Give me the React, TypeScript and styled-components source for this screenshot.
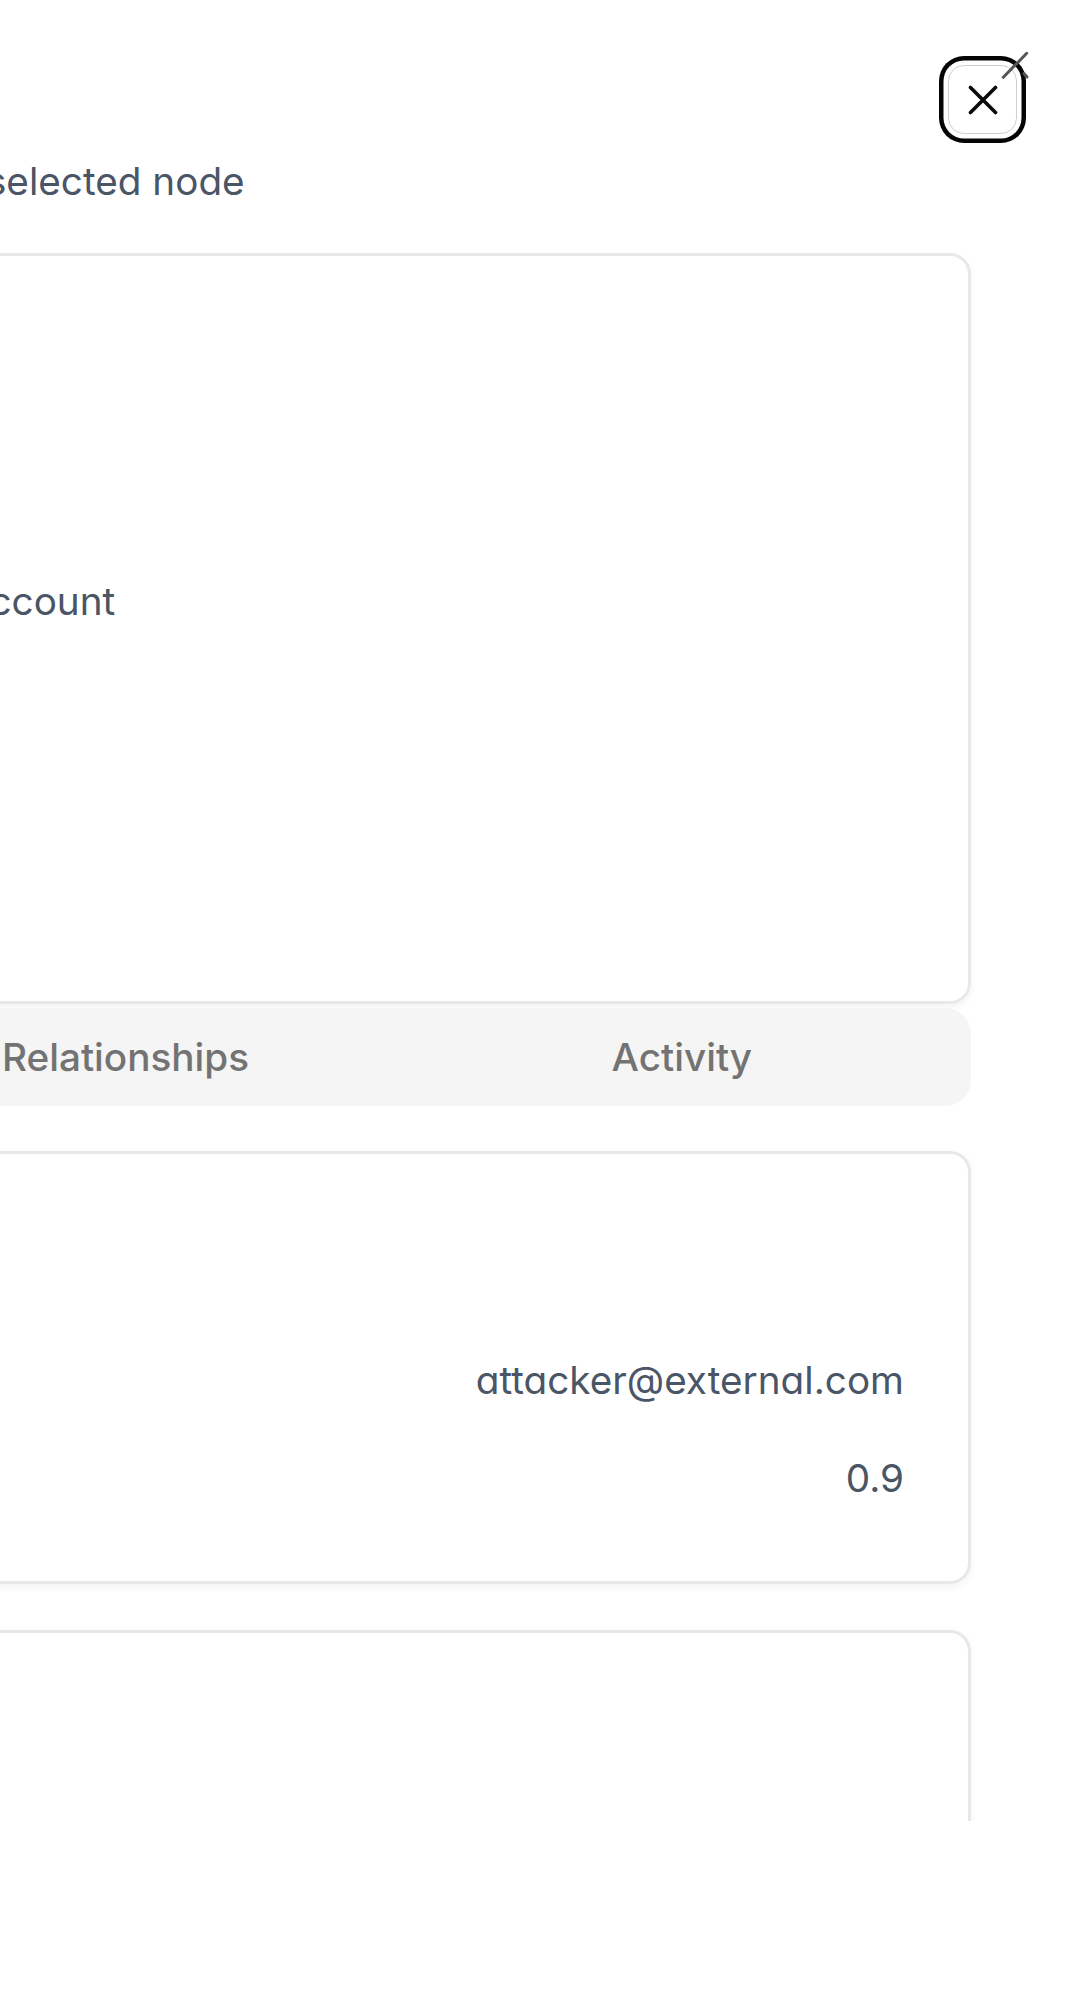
import * as React from "react";
import styled, { createGlobalStyle } from "styled-components";

const GlobalStyle = createGlobalStyle`
  html, body {
    margin: 0;
    padding: 0;
    background: #ffffff;
  }
  body {
    font-family: Inter, "Noto Sans", "Liberation Sans", sans-serif;
    -webkit-font-smoothing: antialiased;
  }
  #root {
    height: 1999px;
  }
`;

// the sheet is wider than the window and sticks out on the left
const Viewport = styled.div`
  display: flex;
  justify-content: flex-end;
  height: 1999px;
  overflow: hidden;
  background: #ffffff;
`;

const Sheet = styled.aside`
  position: relative;
  flex: 0 0 1801px;
  display: flex;
  flex-direction: column;
`;

const Header = styled.header`
  display: flex;
  justify-content: space-between;
  align-items: flex-start;
  padding: 65px 64px 0 0;
`;

const TitleBlock = styled.div<{ indent: number }>`
  display: flex;
  flex-direction: column;
  padding-left: ${(p) => p.indent}px;
`;

const Title = styled.h2`
  margin: 0 0 15px;
  font-size: 48px;
  line-height: 75px;
  font-weight: 600;
  color: #0a0a0a;
`;

const Description = styled.p`
  margin: 0;
  font-size: 38.7px;
  line-height: 53px;
  color: #4a5565;
  white-space: nowrap;
`;

const CloseButton = styled.button`
  display: flex;
  align-items: center;
  justify-content: center;
  width: 69px;
  height: 69px;
  padding: 0;
  border: 1px solid #cfcfcf;
  border-radius: 16px;
  background: #ffffff;
  box-shadow: 0 0 0 4.5px #ffffff, 0 0 0 9px #050505;
  cursor: pointer;
`;

const SheetClose = styled.svg`
  position: absolute;
  top: 50px;
  right: 51px;
  width: 30px;
  height: 30px;
  z-index: 2;
`;

const Body = styled.div`
  display: flex;
  flex-direction: column;
  margin-top: 45px;
  padding-right: 110px;
  height: 1568px;
  overflow: hidden;
`;

const Card = styled.section<{ height?: number; gap?: number }>`
  flex-shrink: 0;
  box-sizing: border-box;
  margin-top: ${(p) => p.gap ?? 0}px;
  ${(p) => (p.height ? `height: ${p.height}px;` : "")}
  border: 3px solid #e8e8e8;
  border-radius: 21px;
  background: #ffffff;
  box-shadow: 0 3px 8px rgba(0, 0, 0, 0.05);
`;

const SummaryContent = styled.div<{ indent: number }>`
  display: flex;
  align-items: center;
  height: 100%;
  padding-left: ${(p) => p.indent}px;
  padding-bottom: 54px;
  box-sizing: border-box;
`;

const SummaryLine = styled.span`
  font-size: 38.7px;
  line-height: 53px;
  color: #4a5565;
  white-space: nowrap;
`;

const TabsList = styled.div`
  flex-shrink: 0;
  display: grid;
  grid-template-columns: repeat(3, 1fr);
  margin-top: 4px;
  height: 98px;
  padding: 11px;
  box-sizing: border-box;
  border-radius: 26px;
  background: #f5f5f5;
`;

const TabTrigger = styled.button<{ active?: boolean }>`
  display: flex;
  align-items: center;
  justify-content: center;
  border: none;
  border-radius: 18px;
  font-family: inherit;
  font-size: 38.7px;
  font-weight: 500;
  color: ${(p) => (p.active ? "#0a0a0a" : "#737373")};
  background: ${(p) => (p.active ? "#ffffff" : "transparent")};
  box-shadow: ${(p) => (p.active ? "0 2px 4px rgba(0,0,0,0.08)" : "none")};
`;

const CardInner = styled.div`
  display: flex;
  flex-direction: column;
  padding: 64px 64px 74px;
`;

const CardTitle = styled.h3`
  margin: 0;
  font-size: 42.7px;
  line-height: 53px;
  font-weight: 600;
  color: #0a0a0a;
`;

const CardDescription = styled.p`
  margin: 8px 0 0;
  font-size: 38.7px;
  line-height: 53px;
  color: #4a5565;
`;

const PropertyList = styled.dl`
  display: flex;
  flex-direction: column;
  gap: 40px;
  margin: 19px 0 0;
`;

const PropertyRow = styled.div`
  display: flex;
  justify-content: space-between;
  align-items: center;
  height: 58px;
`;

const PropertyKey = styled.dt`
  font-size: 38.7px;
  font-weight: 500;
  color: #0a0a0a;
`;

const PropertyValue = styled.dd`
  margin: 0;
  font-size: 38.7px;
  color: #4a5565;
  font-feature-settings: "cv11";
`;

const properties = [
  { key: "email", value: "attacker@external.com" },
  { key: "risk_score", value: "0.9" },
];

export default function App() {
  return (
    <>
      <GlobalStyle />
      <Viewport>
        <Sheet>
          <Header>
            <TitleBlock indent={67}>
              <Title>Node Details</Title>
              <Description>
                Properties and relationships of the selected node
              </Description>
            </TitleBlock>
            <CloseButton aria-label="Close">
              <svg width="30" height="30" viewBox="0 0 30 30">
                <path
                  d="M2.5 2.5 L27.5 27.5 M27.5 2.5 L2.5 27.5"
                  stroke="#0a0a0a"
                  strokeWidth="3.6"
                  strokeLinecap="round"
                />
              </svg>
            </CloseButton>
          </Header>
          <SheetClose viewBox="0 0 30 30">
            <path
              d="M3.3 27.3 L26.7 3.3 M24 23.5 L27 27"
              stroke="#555555"
              strokeWidth="3"
              strokeLinecap="round"
            />
          </SheetClose>

          <Body>
            <Card height={751}>
              <SummaryContent indent={470}>
                <SummaryLine>Type: User Account</SummaryLine>
              </SummaryContent>
            </Card>

            <TabsList>
              <TabTrigger active>Overview</TabTrigger>
              <TabTrigger>Relationships</TabTrigger>
              <TabTrigger>Activity</TabTrigger>
            </TabsList>

            <Card gap={45}>
              <CardInner>
                <CardTitle>Properties</CardTitle>
                <CardDescription>Attributes stored on this node</CardDescription>
                <PropertyList>
                  {properties.map((p) => (
                    <PropertyRow key={p.key}>
                      <PropertyKey>{p.key}</PropertyKey>
                      <PropertyValue>{p.value}</PropertyValue>
                    </PropertyRow>
                  ))}
                </PropertyList>
              </CardInner>
            </Card>

            <Card gap={46} height={600}>
              <CardInner>
                <CardTitle>Connected Nodes</CardTitle>
              </CardInner>
            </Card>
          </Body>
        </Sheet>
      </Viewport>
    </>
  );
}
